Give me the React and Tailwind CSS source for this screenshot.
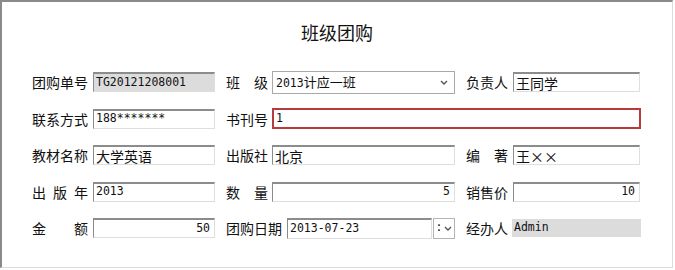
import React from 'react';

const cjk = "font-['Noto_Sans_CJK_SC',sans-serif]";
const mono = "font-['DejaVu_Sans_Mono','Noto_Sans_CJK_SC',monospace] text-[11.5px]";

const sunken =
  'border border-[#dedede] border-t-2 border-t-[#8c8c8c] border-l-[#8c8c8c]';

const Label = ({ text, w = 'w-[42px]', spread = false }) => (
  <div
    className={`${w} shrink-0 text-[14px] leading-none text-[#111] ${cjk} flex ${
      spread ? 'justify-between' : ''
    }`}
  >
    {spread ? text.split('').map((c, i) => <span key={i}>{c}</span>) : text}
  </div>
);

const Input = ({ w, value, ascii = false, right = false, gray = false, red = false }) => (
  <div
    className={`${w} h-5 shrink-0 flex items-center px-[2px] overflow-hidden whitespace-nowrap ${
      red ? 'border-2 border-[#b93a3a] h-[21px]' : sunken
    } ${gray ? 'bg-[#dcdcdc]' : 'bg-white'} ${right ? 'justify-end pr-[4px]' : ''} ${
      ascii ? mono : `text-[14px] ${cjk}`
    } text-[#111] leading-none`}
  >
    {value}
  </div>
);

const Chevron = () => (
  <svg width="8" height="5" viewBox="0 0 8 5" className="shrink-0">
    <path d="M1 1l3 3 3-3" fill="none" stroke="#555" strokeWidth="1.4" />
  </svg>
);

export default function App() {
  return (
    <div className="w-[675px] h-[270px] bg-white">
      <div className="w-[673px] h-[268px] border-t-2 border-l-2 border-t-[#8a8a8a] border-l-[#8a8a8a] border-r border-b border-r-[#dcdcdc] border-b-[#dcdcdc]">
        <h1 className={`pt-[20px] text-center text-[18px] leading-[20px] text-[#111] ${cjk}`}>
          班级团购
        </h1>

        <div className="mt-[30px] ml-[30px] flex flex-col gap-[16.5px]">
          {/* row 1 */}
          <div className="flex items-center h-5">
            <Label text="团购单号" w="w-[56px]" />
            <div className="ml-[5px]">
              <Input w="w-[122px]" value="TG20121208001" ascii gray />
            </div>
            <div className="ml-[11px] flex items-center">
              <Label text="班级" spread />
              <div className="ml-[4px] w-[183px] h-[23px] border border-[#a9a9a9] bg-white flex items-center justify-between pl-[3px] pr-[6px]">
                <span className={`text-[13px] leading-none text-[#111] ${cjk}`}>
                  <span className={mono}>2013</span>计应一班
                </span>
                <Chevron />
              </div>
            </div>
            <div className="ml-[11px] flex items-center">
              <Label text="负责人" />
              <div className="ml-[5px]">
                <Input w="w-[127px]" value="王同学" />
              </div>
            </div>
          </div>

          {/* row 2 */}
          <div className="flex items-center h-5">
            <Label text="联系方式" w="w-[56px]" />
            <div className="ml-[5px]">
              <Input w="w-[122px]" value="188*******" ascii />
            </div>
            <div className="ml-[11px] flex items-center">
              <Label text="书刊号" />
              <div className="ml-[4px]">
                <Input w="w-[369px]" value="1" ascii red />
              </div>
            </div>
          </div>

          {/* row 3 */}
          <div className="flex items-center h-5">
            <Label text="教材名称" w="w-[56px]" />
            <div className="ml-[5px]">
              <Input w="w-[122px]" value="大学英语" />
            </div>
            <div className="ml-[11px] flex items-center">
              <Label text="出版社" />
              <div className="ml-[4px]">
                <Input w="w-[183px]" value="北京" />
              </div>
            </div>
            <div className="ml-[11px] flex items-center">
              <Label text="编著" spread />
              <div className="ml-[5px]">
                <Input w="w-[127px]" value="王××" />
              </div>
            </div>
          </div>

          {/* row 4 */}
          <div className="flex items-center h-5">
            <Label text="出版年" w="w-[56px]" spread />
            <div className="ml-[5px]">
              <Input w="w-[122px]" value="2013" ascii />
            </div>
            <div className="ml-[11px] flex items-center">
              <Label text="数量" spread />
              <div className="ml-[4px]">
                <Input w="w-[183px]" value="5" ascii right />
              </div>
            </div>
            <div className="ml-[11px] flex items-center">
              <Label text="销售价" />
              <div className="ml-[5px]">
                <Input w="w-[127px]" value="10" ascii right />
              </div>
            </div>
          </div>

          {/* row 5 */}
          <div className="flex items-center h-5">
            <Label text="金额" w="w-[56px]" spread />
            <div className="ml-[5px]">
              <Input w="w-[122px]" value="50" ascii right />
            </div>
            <div className="ml-[11px] flex items-center">
              <Label text="团购日期" w="w-[56px]" />
              <div className="ml-[5px] flex items-center">
                <div className={`w-[145px] h-[21px] ${sunken} bg-white flex items-center px-[2px] ${mono} text-[#111] leading-none`}>
                  2013-07-23
                </div>
                <div className="ml-[1px] w-[22px] h-[21px] border border-[#b4b4b4] bg-white flex items-center justify-center gap-[2px]">
                  <span className={`${mono} text-[#111] leading-none`}>:</span>
                  <Chevron />
                </div>
              </div>
            </div>
            <div className="ml-[11px] flex items-center">
              <Label text="经办人" />
              <div className="ml-[4px] w-[129px] h-[18px] bg-[#dcdcdc] flex items-center px-[2px] text-[#111] leading-none">
                <span className={mono}>Admin</span>
              </div>
            </div>
          </div>
        </div>
      </div>
    </div>
  );
}
